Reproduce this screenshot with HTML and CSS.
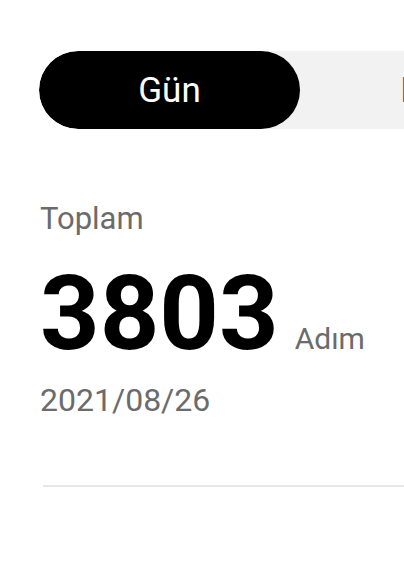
FILE: index.html
```html
<!DOCTYPE html>
<html lang="tr">
<head>
    <meta charset="UTF-8">
    <meta name="viewport" content="width=device-width, initial-scale=1.0">
    <title>Adım Sayar</title>
    <link rel="stylesheet" href="styles.css">
</head>
<body>
    <div class="tabs">
        <div class="tab active">Gün</div>
        <div class="tab">Hafta</div>
        <div class="tab">Ay</div>
    </div>

    <div class="summary">
        <div class="label">Toplam</div>
        <div class="total">
            <span class="steps">3803</span>
            <span class="unit">Adım</span>
        </div>
        <div class="date">2021/08/26</div>
    </div>

    <div class="divider"></div>
</body>
</html>
```

FILE: styles.css
```css
body {
    font-family: Roboto, "Noto Sans", Arial, sans-serif;
    background-color: #fff;
    color: #000;
    margin: 0;
    overflow: hidden;
}
.tabs {
    display: flex;
    margin: 51px 0 0 39px;
    height: 78px;
    background-color: #f2f2f2;
    border-radius: 39px 0 0 39px;
    overflow: hidden;
}
.tab {
    flex: 0 0 261px;
    box-sizing: border-box;
    display: flex;
    justify-content: center;
    align-items: center;
    padding-left: 26px;
    font-size: 35px;
    color: #555;
    border-radius: 39px;
}
.tab.active {
    padding-left: 0;
    background-color: #000;
    color: #fff;
}
.summary {
    padding-left: 40px;
}
.label {
    margin-top: 72px;
    font-size: 31px;
    line-height: 36px;
    color: #6b6b6b;
}
.total {
    display: flex;
    align-items: baseline;
    margin-top: 24px;
}
.steps {
    font-size: 104px;
    font-weight: bold;
    line-height: 105px;
}
.unit {
    margin-left: 16px;
    font-size: 30px;
    line-height: 36px;
    color: #6b6b6b;
}
.date {
    margin-top: 16px;
    font-size: 32px;
    line-height: 36px;
    color: #6b6b6b;
}
.divider {
    margin: 67px 0 0 43px;
    height: 2px;
    background-color: #e8e8e8;
}
```
